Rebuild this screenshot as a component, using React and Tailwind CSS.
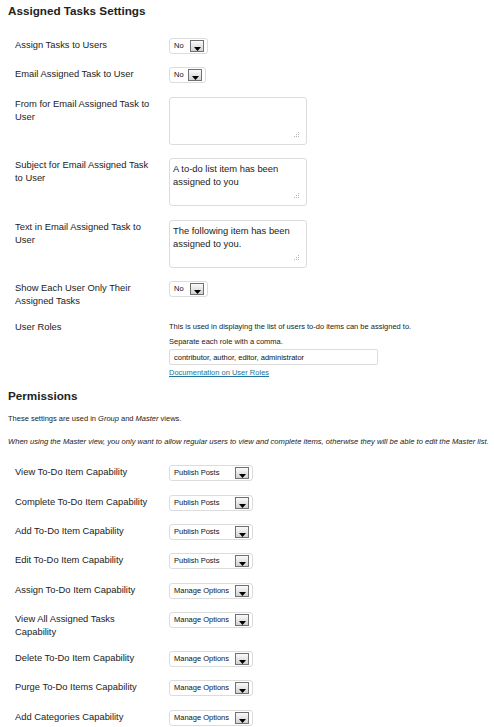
/*
  Assigned tasks + permissions settings panel (WP admin style form table).
*/

const PERMISSIONS = [
  { label: 'View To-Do Item Capability', value: 'Publish Posts' },
  { label: 'Complete To-Do Item Capability', value: 'Publish Posts' },
  { label: 'Add To-Do Item Capability', value: 'Publish Posts' },
  { label: 'Edit To-Do Item Capability', value: 'Publish Posts' },
  { label: 'Assign To-Do Item Capability', value: 'Manage Options' },
  { label: 'View All Assigned Tasks Capability', value: 'Manage Options' },
  { label: 'Delete To-Do Item Capability', value: 'Manage Options' },
  { label: 'Purge To-Do Items Capability', value: 'Manage Options' },
  { label: 'Add Categories Capability', value: 'Manage Options' },
];

function DropButton() {
  return (
    <div className="flex h-[12px] w-[14px] shrink-0 items-end justify-center border border-[#707070] bg-linear-to-b from-[#fafafa] to-[#d2d2d2]">
      <svg width="7" height="4" viewBox="0 0 7 4">
        <path d="M0 0h7L3.5 4z" fill="#000" />
      </svg>
    </div>
  );
}

function Select({ value, className }) {
  return (
    <div
      className={`flex h-[16px] items-center justify-between rounded-[3px] border border-[#dcdcdc] bg-white pl-[4px] pr-[3px] ${className}`}
    >
      <span className="text-[7.5px] leading-[10px] text-[#111]">{value}</span>
      <DropButton />
    </div>
  );
}

function Grip() {
  return (
    <svg className="absolute bottom-[6px] right-[7px]" width="6" height="6" viewBox="0 0 6 6">
      <rect x="5" y="0" width="1" height="1" fill="#b5b5b5" />
      <rect x="3" y="2" width="1" height="1" fill="#b5b5b5" />
      <rect x="5" y="2" width="1" height="1" fill="#b5b5b5" />
      <rect x="1" y="4" width="1" height="1" fill="#b5b5b5" />
      <rect x="3" y="4" width="1" height="1" fill="#b5b5b5" />
      <rect x="5" y="4" width="1" height="1" fill="#b5b5b5" />
    </svg>
  );
}

function TextArea({ text }) {
  return (
    <div className="relative h-[48px] w-[138px] rounded-[3px] border border-[#dcdcdc] bg-white px-[3px] pt-[3px] text-[9.4px] leading-[13px] text-[#222]">
      {text}
      <Grip />
    </div>
  );
}

function Row({ label, children }) {
  return (
    <div className="flex items-start">
      <div className="w-[154px] shrink-0 pr-[14px] text-[9.4px] leading-[13px] text-[#222]">{label}</div>
      <div>{children}</div>
    </div>
  );
}

export default function App() {
  return (
    <div className="min-h-screen bg-white pl-[8px] pt-[4px] font-['Liberation_Sans',Arial,sans-serif] text-[#222]">
      <h3 className="text-[11.7px] font-bold leading-[14px] text-[#222]">Assigned Tasks Settings</h3>

      <div className="mt-[20px] flex flex-col gap-[13.4px] pl-[7px]">
        <Row label="Assign Tasks to Users">
          <Select value="No" className="w-[39px]" />
        </Row>
        <Row label="Email Assigned Task to User">
          <Select value="No" className="w-[37px]" />
        </Row>
        <Row label="From for Email Assigned Task to User">
          <TextArea text="" />
        </Row>
        <Row label="Subject for Email Assigned Task to User">
          <TextArea text="A to-do list item has been assigned to you" />
        </Row>
        <Row label="Text in Email Assigned Task to User">
          <TextArea text="The following item has been assigned to you." />
        </Row>
        <Row label="Show Each User Only Their Assigned Tasks">
          <Select value="No" className="w-[39px]" />
        </Row>
        <Row label="User Roles">
          <div className="flex flex-col">
            <p className="text-[7.5px] leading-[14px] text-[#222]">
              This is used in displaying the list of users to-do items can be assigned to.
            </p>
            <p className="mt-[1px] text-[7.5px] leading-[14px] text-[#222]">Separate each role with a comma.</p>
            <div className="flex h-[16px] w-[209px] items-center rounded-[2px] border border-[#dcdcdc] bg-white px-[4px] text-[7.5px] text-[#111]">
              contributor, author, editor, administrator
            </div>
            <a href="#" className="mt-[3px] text-[7.5px] leading-[10px] text-[#21759b] underline">
              Documentation on User Roles
            </a>
          </div>
        </Row>
      </div>

      <h3 className="mt-[11px] text-[11.7px] font-bold leading-[14px] text-[#222]">Permissions</h3>
      <p className="mt-[11px] text-[7.5px] leading-[10px] text-[#222]">
        These settings are used in <em>Group</em> and <em>Master</em> views.
      </p>
      <p className="mt-[13px] text-[7.6px] italic leading-[10px] text-[#222]">
        When using the Master view, you only want to allow regular users to view and complete items, otherwise they
        will be able to edit the Master list.
      </p>

      <div className="mt-[18px] flex flex-col gap-[13.3px] pl-[7px]">
        {PERMISSIONS.map((perm) => (
          <Row key={perm.label} label={perm.label}>
            <Select value={perm.value} className="w-[84px]" />
          </Row>
        ))}
      </div>
    </div>
  );
}
